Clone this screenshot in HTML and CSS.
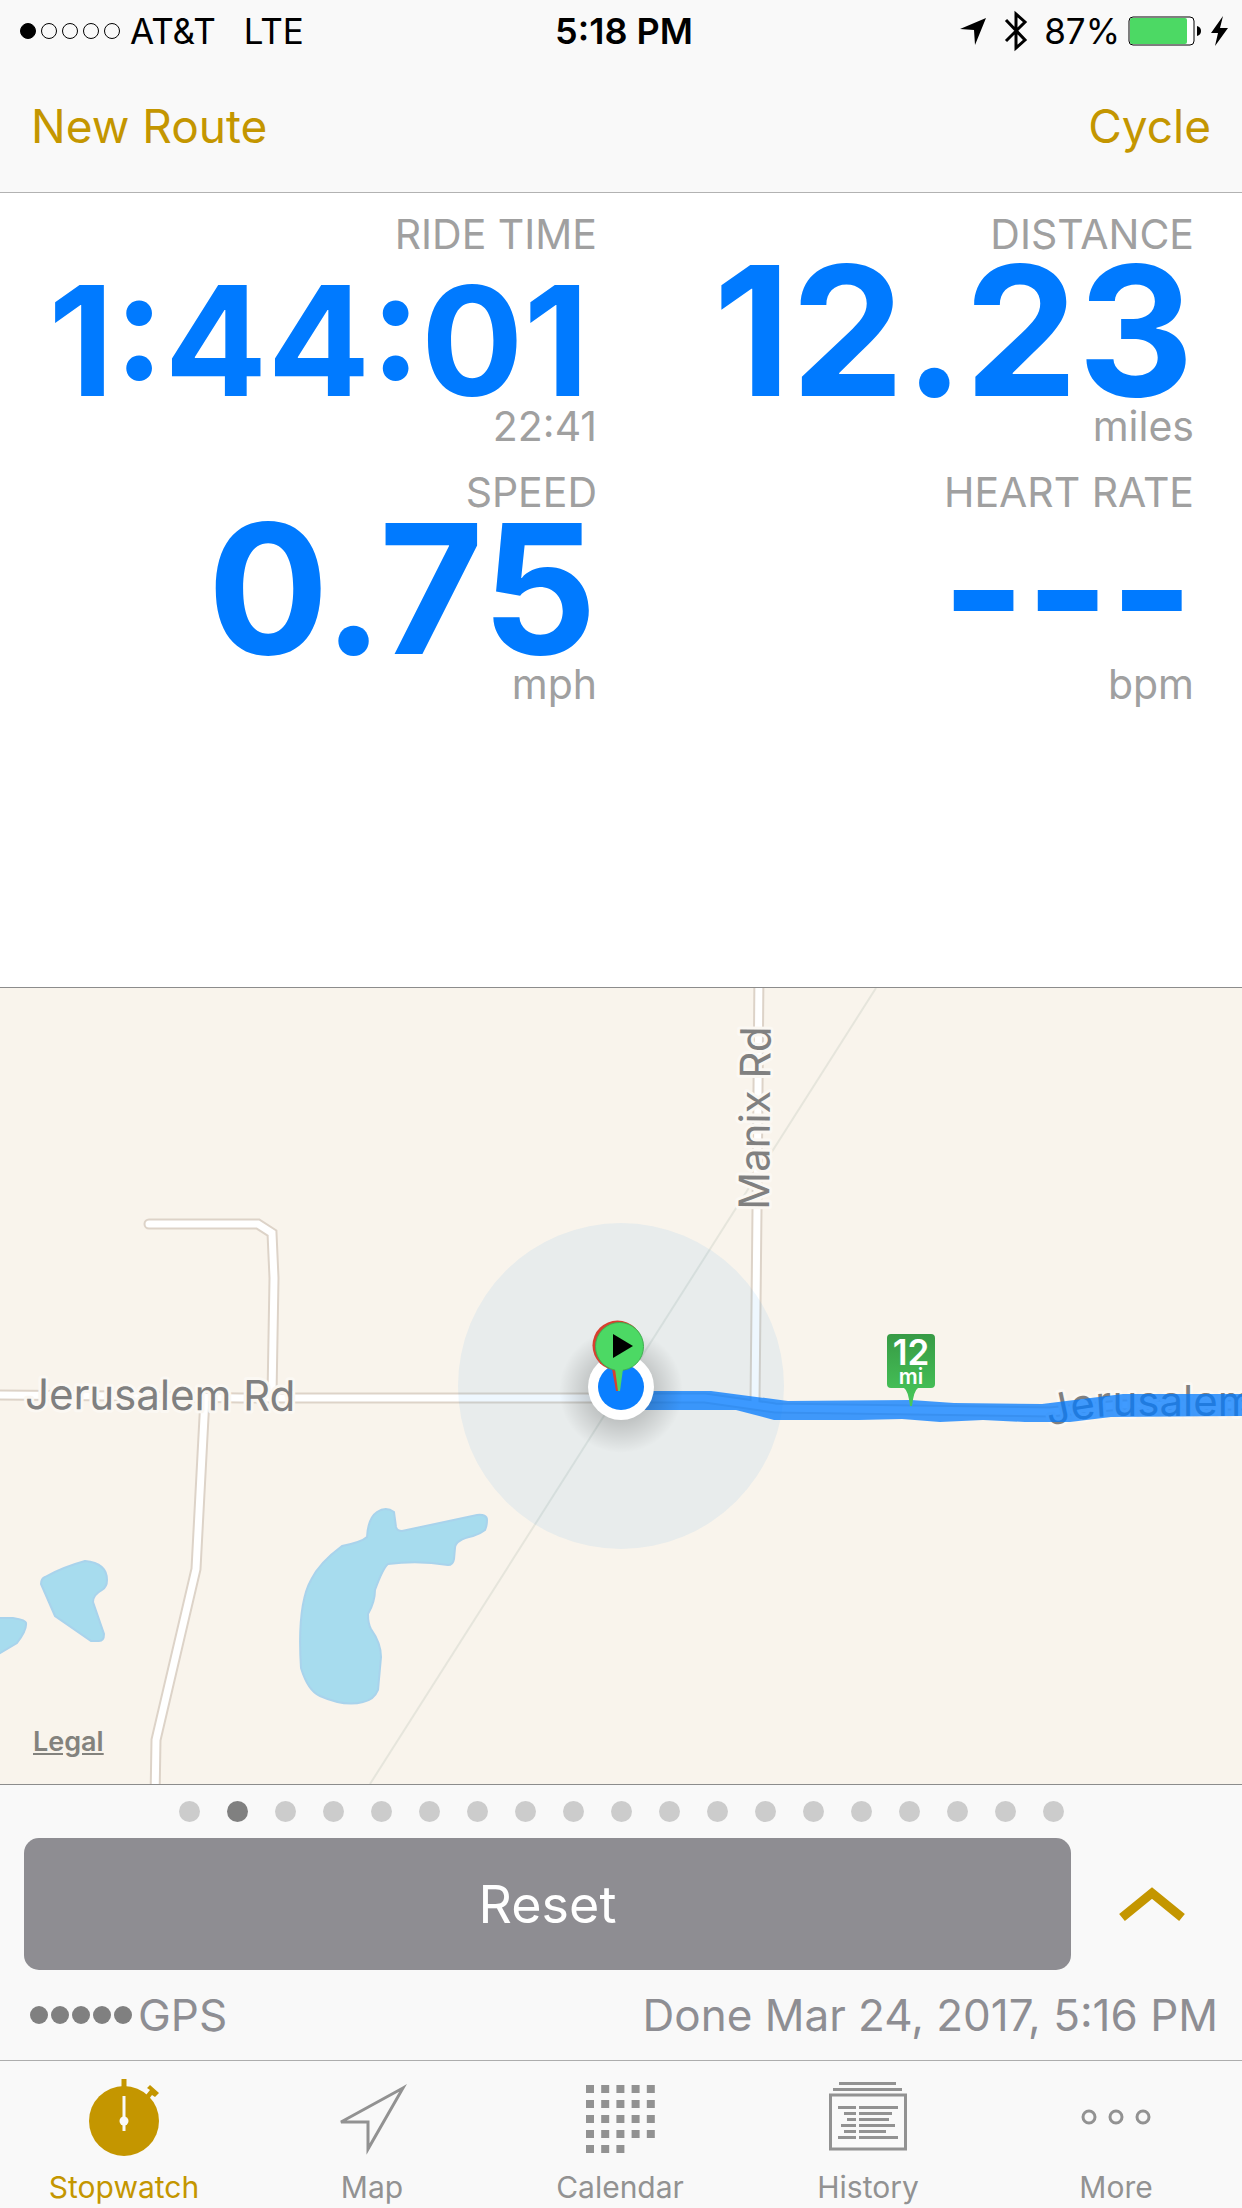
FILE: index.html
```html
<!DOCTYPE html>
<html lang="en">
<head>
<meta charset="utf-8">
<meta name="viewport" content="width=device-width, initial-scale=1">
<title>Stopwatch</title>
<link rel="stylesheet" href="styles.css">
</head>
<body>
<div class="app">
  <header class="top">
    <div class="status">
      <div class="status-left">
        <span class="signal"><i class="on"></i><i></i><i></i><i></i><i></i></span>
        <span>AT&amp;T</span>
        <span class="network">LTE</span>
      </div>
      <div class="clock">5:18 PM</div>
      <div class="status-right">
        <svg class="ico-loc" width="26" height="27" viewBox="0 0 26 27"><path d="M26 0 15 27 14 12 0 11Z"/></svg>
        <svg class="ico-bt" width="24" height="42" viewBox="0 0 24 42"><path d="M2 10 21 30 12 38V4L21 12 2 31" fill="none" stroke="#000" stroke-width="3"/></svg>
        <span>87%</span>
        <svg class="ico-bat" width="74" height="30" viewBox="0 0 74 30"><rect x="1" y="1" width="65" height="28" rx="4" fill="#fff" stroke="#000" stroke-width="1"/><rect x="2" y="2" width="57" height="26" rx="2" fill="#4cd964"/><path d="M69 10q4 1 4 5t-4 5Z"/></svg>
        <svg class="ico-bolt" width="17" height="30" viewBox="0 0 17 30"><path d="M12 0 0 17H7L4 30 17 12H9Z"/></svg>
      </div>
    </div>
    <nav class="navbar">
      <button type="button">New Route</button>
      <button type="button">Cycle</button>
    </nav>
  </header>

  <main class="main">
    <section class="metrics">
      <div class="metric">
        <div class="label">RIDE TIME</div>
        <div class="value"><span class="long">1:44:01</span></div>
        <div class="unit">22:41</div>
      </div>
      <div class="metric">
        <div class="label">DISTANCE</div>
        <div class="value">12.23</div>
        <div class="unit">miles</div>
      </div>
      <div class="metric">
        <div class="label">SPEED</div>
        <div class="value">0.75</div>
        <div class="unit">mph</div>
      </div>
      <div class="metric">
        <div class="label">HEART RATE</div>
        <div class="value">---</div>
        <div class="unit">bpm</div>
      </div>
    </section>

    <section class="map">
      <svg class="map-art" viewBox="0 988 1242 796" preserveAspectRatio="xMidYMid slice">
        <defs>
          <linearGradient id="mile" x1="0" y1="0" x2="0" y2="1"><stop offset="0" stop-color="#379a45"/><stop offset="1" stop-color="#48c95b"/></linearGradient>
          <radialGradient id="halo"><stop offset="0.4" stop-color="#000" stop-opacity=".2"/><stop offset="1" stop-color="#000" stop-opacity="0"/></radialGradient>
          <path id="curve" d="M1049 1426Q1075 1420 1090 1418T1125 1416L1400 1416"/>
          <g id="roads">
            <path d="M-10 1395 120 1396 240 1398H705L775 1408 1050 1412 1120 1405H1260"/>
            <path d="M149 1224H258L272 1233 274 1278 272 1396"/>
            <path d="M205 1398 196 1569 156 1740 155 1800"/>
            <path d="M759 970 757 1210 755 1402"/>
          </g>
        </defs>
        <path d="M876 988 370 1784" class="trail"/>
        <use href="#roads" class="casing"/>
        <use href="#roads" class="paving"/>
        <g class="water">
          <path d="M367 1537Q368 1518 377 1512T394 1512L396 1527Q397 1531 402 1531L477 1515Q487 1514 487 1520T485 1530Q480 1534 473 1536 455 1540 455 1548L454 1559Q453 1565 448 1565 418 1560 388 1564 383 1568 375 1590 375 1602 368 1614 368 1624 371 1629 381 1643 381 1657L378 1690Q374 1700 363 1702 345 1707 320 1696 308 1691 301 1668 297 1605 311 1580 319 1563 342 1546 362 1542 367 1537Z"/>
          <path d="M41 1584Q41 1579 45 1577 63 1567 85 1561 107 1563 107 1580 107 1587 102 1590 93 1595 93 1602L104 1634Q104 1641 99 1641H91L55 1616Z"/>
          <path d="M-8 1618H13Q26 1620 26 1623 27 1630 17 1643L-8 1658Z"/>
        </g>
        <g class="road-names">
          <text x="25" y="1409" transform="rotate(.4 25 1409)">Jerusalem Rd</text>
          <text x="769" y="1210" transform="rotate(-89.5 769 1210)">Manix Rd</text>
          <text><textPath href="#curve">Jerusalem Rd</textPath></text>
        </g>
        <circle cx="621" cy="1386" r="163" fill="#1490eb" opacity=".07"/>
        <path class="route" d="M640 1391H711L788 1401 911 1400 954 1403 1042 1404 1123 1394H1260V1416L1111 1417 1070 1422 1025 1422 983 1420 940 1422 902 1419 859 1420H774L736 1410H640Z"/>
        <circle cx="621" cy="1391" r="62" fill="url(#halo)"/>
        <circle cx="621" cy="1387" r="33" fill="#fff"/>
        <circle cx="621" cy="1387" r="23" fill="#0a7fff"/>
        <g fill="#d8402f"><circle cx="617.500" cy="1345.500" r="25"/><path d="M612 1369H620V1391H616Z"/></g>
        <g fill="#4cd964"><circle cx="619.500" cy="1346.500" r="24" stroke="#3fae50"/><path d="M615 1369H623L620 1391H618Z"/></g>
        <path d="M613 1334V1358L633 1346Z"/>
        <path fill="url(#mile)" d="M891 1334H931a4 4 0 0 1 4 4V1384a4 4 0 0 1-4 4H918Q914 1390 912 1406H910Q908 1390 904 1388H891a4 4 0 0 1-4-4V1338a4 4 0 0 1 4-4Z"/>
        <g class="mile-text"><text x="911" y="1365" font-size="35">12</text><text x="911" y="1384" font-size="21">mi</text></g>
      </svg>
      <a class="legal" href="#legal">Legal</a>
    </section>
  </main>

  <section class="panel">
    <div class="pages"><i></i><i class="on"></i><i></i><i></i><i></i><i></i><i></i><i></i><i></i><i></i><i></i><i></i><i></i><i></i><i></i><i></i><i></i><i></i><i></i></div>
    <div class="actions">
      <button type="button" class="reset">Reset</button>
      <button type="button" class="expand" aria-label="Show more">
        <svg width="66" height="34" viewBox="0 0 66 34"><path d="M3 30.500 33 6 63 30.500" fill="none" stroke="#c49600" stroke-width="9"/></svg>
      </button>
    </div>
    <div class="info">
      <span class="gps"><span class="bars"><i></i><i></i><i></i><i></i><i></i></span>GPS</span>
      <span>Done Mar 24, 2017, 5:16 PM</span>
    </div>
  </section>

  <nav class="tabs">
    <a class="tab active" href="#stopwatch">
      <svg width="70" height="78" viewBox="0 0 70 78"><circle cx="35" cy="42" r="35"/><path d="M32.500 0h5v10h-5ZM57 16l4-5-3-2 3-3 9 8-4 4-3-2-3 4Z"/><path d="M35 17V52" stroke="#f9f9f9" stroke-width="3"/><circle cx="35" cy="42" r="4.500" fill="#f9f9f9"/></svg>
      Stopwatch
    </a>
    <a class="tab" href="#map">
      <svg width="70" height="78" viewBox="0 0 70 78"><path d="M66 9 4 43H31V70Z" fill="none" stroke="#929292" stroke-width="3"/></svg>
      Map
    </a>
    <a class="tab" href="#calendar">
      <svg width="70" height="78" viewBox="0 0 70 78"><path stroke="#929292" stroke-width="8" stroke-dasharray="8 7.200" d="M1 10H70M1 25H70M1 40H70M1 55H70M1 70H40"/></svg>
      Calendar
    </a>
    <a class="tab" href="#history">
      <svg width="78" height="78" viewBox="0 0 78 78"><g fill="none" stroke="#929292" stroke-width="3"><path d="M10 4.500H67M4 10.500H73"/><rect x="1.500" y="16" width="75" height="54"/><path d="M9 28.500H27M30 28.500H69M15 34.500H27M30 34.500H63M18 40.500H27M30 40.500H60M12 46.500H27M30 46.500H66M15 52.500H27M30 52.500H57M9 58.500H27M30 58.500H69"/></g></svg>
      History
    </a>
    <a class="tab" href="#more">
      <svg width="70" height="78" viewBox="0 0 70 78"><g fill="none" stroke="#929292" stroke-width="3"><circle cx="8" cy="38" r="6"/><circle cx="35" cy="38" r="6"/><circle cx="62" cy="38" r="6"/></g></svg>
      More
    </a>
  </nav>
</div>
</body>
</html>
```
FILE: styles.css
```css
* { box-sizing: border-box; }

body {
  margin: 0;
  background: #fff;
  color: #000;
  font-family: Inter, "Liberation Sans", sans-serif;
}

button {
  border: 0;
  padding: 0;
  background: none;
  font: inherit;
  color: inherit;
}

svg { display: block; flex: none; }

.app {
  display: flex;
  flex-direction: column;
  min-height: 100vh;
}

.top {
  background: #f9f9f9;
  border-bottom: 1px solid #b2b2b2;
}

.status {
  display: grid;
  grid-template-columns: 1fr auto 1fr;
  align-items: center;
  height: 62px;
  padding: 0 14px 0 20px;
  font-size: 35px;
}

.status-left,
.status-right {
  display: flex;
  align-items: center;
}

.status-right { justify-content: flex-end; }

.signal {
  display: flex;
  gap: 5px;
  margin-right: 10px;
}

.signal i {
  width: 16px;
  height: 16px;
  border: 1px solid #000;
  border-radius: 50%;
}

.signal .on { background: #000; }

.network { margin-left: 28px; }

.clock {
  font-size: 36px;
  font-weight: 600;
}

.ico-loc { margin-right: 18px; }
.ico-bt { margin-right: 16px; }
.ico-bat { margin: 0 9px 0 8px; }

.navbar {
  display: flex;
  justify-content: space-between;
  align-items: center;
  height: 130px;
  padding: 0 31px 2px;
  font-size: 46px;
  color: #c49600;
}

.main {
  flex: 1;
  display: grid;
  grid-template-rows: 199fr 200fr;
}

.metrics {
  display: grid;
  grid-template-columns: 1fr 1fr;
  align-content: start;
  row-gap: 18px;
  padding: 16px 48px 16px 0;
  text-align: right;
}

.label,
.unit {
  font-size: 41px;
  color: #a0a0a0;
}

.label { line-height: 50px; }
.unit { line-height: 46px; }

.value {
  font-size: 180px;
  line-height: 144px;
  font-weight: 700;
  color: #007aff;
  white-space: nowrap;
}

.long {
  margin-right: 8px;
  font-size: 152px;
  line-height: 100px;
}

.map {
  position: relative;
  min-height: 400px;
  overflow: hidden;
  background: #f9f4ec;
  border-top: 1px solid #8c8c8c;
  border-bottom: 1px solid #8c8c8c;
}

.map-art {
  position: absolute;
  width: 100%;
  height: 100%;
}

.trail { stroke: #e6e5dc; stroke-width: 2; }
.casing { fill: none; stroke: #ddd3c8; stroke-width: 11; stroke-linecap: round; }
.paving { fill: none; stroke: #fff; stroke-width: 7; stroke-linecap: round; }
.water { fill: #a7dcee; stroke: #a9d3ec; stroke-width: 2; }
.route { fill: #007aff; opacity: .75; }

.road-names {
  font-size: 42px;
  fill: #808080;
  stroke: #fbf8f3;
  stroke-width: 6;
  stroke-linejoin: round;
  paint-order: stroke;
}

.mile-text {
  fill: #fff;
  font-weight: 600;
  text-anchor: middle;
}

.legal {
  position: absolute;
  left: 33px;
  bottom: 24px;
  font-size: 27px;
  line-height: 36px;
  font-weight: 600;
  color: #83827d;
}

.panel {
  padding: 16px 24px 0;
  background: #f9f9f9;
}

.pages {
  display: flex;
  justify-content: center;
  gap: 27px;
}

.pages i {
  width: 21px;
  height: 21px;
  border-radius: 50%;
  background: #ccc;
}

.pages .on { background: #808080; }

.actions {
  display: flex;
  margin-top: 16px;
}

.reset {
  flex: 1;
  height: 132px;
  border-radius: 15px;
  background: #8e8d92;
  color: #fff;
  font-size: 52px;
}

.expand {
  display: flex;
  align-items: center;
  justify-content: center;
  width: 147px;
  padding-left: 14px;
}

.info {
  display: flex;
  justify-content: space-between;
  align-items: center;
  height: 90px;
  padding-left: 6px;
  font-size: 44px;
  color: #8e8e93;
}

.gps,
.bars {
  display: flex;
  align-items: center;
}

.gps { gap: 6px; }
.bars { gap: 3px; }

.bars i {
  width: 18px;
  height: 18px;
  border-radius: 50%;
  background: #808080;
}

.tabs {
  display: grid;
  grid-template-columns: repeat(5, 1fr);
  padding-right: 2px;
  background: #f9f9f9;
  border-top: 1px solid #adadad;
}

.tab {
  display: flex;
  flex-direction: column;
  align-items: center;
  gap: 12px;
  padding: 18px 0 3px;
  font-size: 30px;
  line-height: 36px;
  color: #929292;
  text-decoration: none;
}

.tab.active {
  color: #c49600;
  fill: #c49600;
}
```
